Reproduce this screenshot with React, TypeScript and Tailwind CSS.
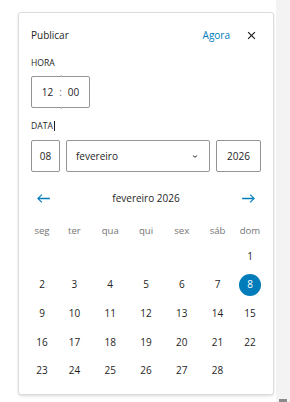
import { useState } from 'react';

const weekDays = ['seg', 'ter', 'qua', 'qui', 'sex', 'sáb', 'dom'];

// fevereiro 2026 starts on a Sunday
const cells: (number | null)[] = [
  null, null, null, null, null, null,
  ...Array.from({ length: 28 }, (_, i) => i + 1),
];

const ArrowLeft = () => (
  <svg viewBox="0 0 24 24" className="h-[19px] w-[19px] fill-[#007cba]">
    <path d="M20 11.2H6.8l3.7-3.7-1-1L3.9 12l5.6 5.5 1-1-3.7-3.7H20z" />
  </svg>
);

const ArrowRight = () => (
  <svg viewBox="0 0 24 24" className="h-[19px] w-[19px] fill-[#007cba]">
    <path d="m14.5 6.5-1 1 3.7 3.7H4v1.6h13.2l-3.7 3.7 1 1 5.6-5.5z" />
  </svg>
);

export default function App() {
  const [selected, setSelected] = useState(8);

  return (
    <div className="flex h-[402px] w-[290px] bg-white font-['Open_Sans','Noto_Sans',sans-serif] text-[#1e1e1e]">
      <div className="flex-1 pl-[18px] pt-[12px]">
        <div className="w-[256px] rounded-[3px] border border-[#dcdcdc] bg-white p-[12px] shadow-[0_1px_2px_rgba(0,0,0,0.08),0_2px_4px_-1px_rgba(0,0,0,0.08)]">
          {/* Header */}
          <div className="flex h-[20px] items-center">
            <span className="text-[10px] font-medium">Publicar</span>
            <button className="ml-auto mr-[12px] text-[10px] text-[#007cba]">Agora</button>
            <button className="flex h-[19px] w-[19px] items-center justify-center" aria-label="Fechar">
              <svg viewBox="0 0 24 24" className="h-[19px] w-[19px] fill-[#1e1e1e]">
                <path d="M12 13.06l3.712 3.713 1.061-1.06L13.061 12l3.712-3.712-1.06-1.06L12 10.938 8.288 7.227l-1.061 1.06L10.939 12l-3.712 3.712 1.06 1.061L12 13.061z" />
              </svg>
            </button>
          </div>

          {/* Hora */}
          <div className="mt-[12px] h-[12px] text-[8.6px] leading-[12px]">HORA</div>
          <div className="relative mt-[7px] flex h-[32px] w-[59px] items-center justify-center gap-[6px] rounded-[2px] border border-[#949494] text-[10px]">
            <span>12</span>
            <span className="text-[#757575]">:</span>
            <span>00</span>
            <span className="absolute -top-[2px] left-[29px] h-[2px] w-px bg-[#b5b5b5]" />
            <span className="absolute -bottom-[2px] left-[29px] h-[2px] w-px bg-[#b5b5b5]" />
          </div>

          {/* Data */}
          <div className="mt-[12px] flex h-[12px] items-center text-[8.6px] leading-[12px]">
            DATA
            <span className="ml-[1px] h-[10px] w-px bg-[#1e1e1e]" />
          </div>
          <div className="mt-[8px] flex h-[32px] gap-[6px] text-[10px]">
            <div className="flex w-[29px] items-center justify-center rounded-[2px] border border-[#949494]">08</div>
            <div className="flex w-[144px] items-center justify-between rounded-[2px] border border-[#949494] pl-[9px] pr-[9px]">
              <span>fevereiro</span>
              <svg viewBox="0 0 24 24" className="h-[10px] w-[10px] fill-[#1e1e1e]">
                <path d="M17.5 11.6L12 16l-5.5-4.4.9-1.2L12 14l4.6-3.6 1 1.2z" />
              </svg>
            </div>
            <div className="flex w-[45px] items-center justify-center rounded-[2px] border border-[#949494]">2026</div>
          </div>

          {/* Month navigation */}
          <div className="mt-[14px] flex h-[24px] items-center justify-between px-[3px]">
            <button aria-label="Mês anterior"><ArrowLeft /></button>
            <span className="text-[10px] font-medium">fevereiro 2026</span>
            <button aria-label="Próximo mês"><ArrowRight /></button>
          </div>

          {/* Weekdays */}
          <div className="mt-[13px] grid h-[16px] grid-cols-[22px_repeat(5,minmax(0,1fr))_22px] items-center justify-items-center gap-x-[7px] text-[9.6px] text-[#757575]">
            {weekDays.map((d) => (
              <span key={d}>{d}</span>
            ))}
          </div>

          {/* Days */}
          <div className="mt-[6px] grid grid-cols-[22px_repeat(5,minmax(0,1fr))_22px] justify-items-center gap-x-[7px] gap-y-[6.7px] text-[10px]">
            {cells.map((day, i) =>
              day === null ? (
                <span key={`e${i}`} className="h-[22px]" />
              ) : (
                <button
                  key={day}
                  onClick={() => setSelected(day)}
                  className={`flex h-[22px] w-[22px] items-center justify-center rounded-full ${
                    day === selected ? 'bg-[#007cba] font-medium text-white' : ''
                  }`}
                >
                  {day}
                </button>
              )
            )}
          </div>
        </div>
      </div>
      <div className="flex w-[14px] flex-col items-center justify-end bg-[#f3f3f3]">
        <div className="h-[3px] w-[8px] bg-[#8a8a8a]" />
      </div>
    </div>
  );
}
